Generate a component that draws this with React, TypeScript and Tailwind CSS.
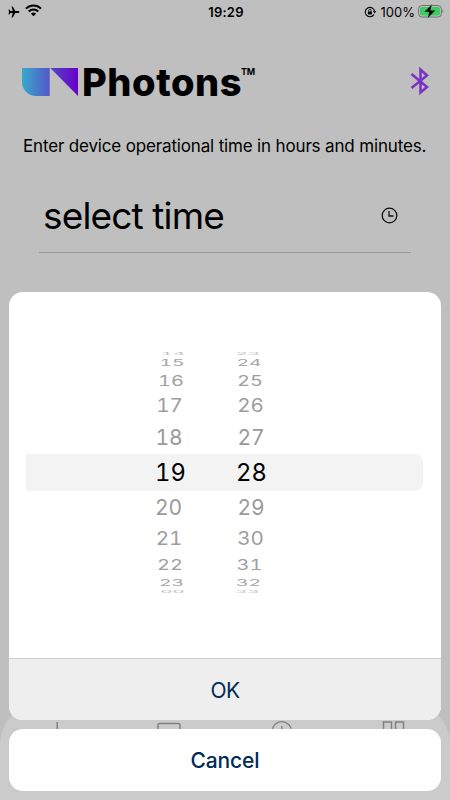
import React from "react";

type WheelRow = {
  hour: string;
  minute: string;
  height: number;
  hourX: number;
  minuteX: number;
  scaleX: number;
  scaleY: number;
  tone: string;
};

const rows: WheelRow[] = [
  { hour: "14", minute: "23", height: 3, hourX: 173, minuteX: 248, scaleX: 0.88, scaleY: 0.18, tone: "text-[#bdbdbd]" },
  { hour: "15", minute: "24", height: 15, hourX: 172, minuteX: 249, scaleX: 0.92, scaleY: 0.4, tone: "text-[#a6a6a6]" },
  { hour: "16", minute: "25", height: 21, hourX: 171, minuteX: 250, scaleX: 0.95, scaleY: 0.68, tone: "text-[#a0a0a0]" },
  { hour: "17", minute: "26", height: 30, hourX: 169.5, minuteX: 250.5, scaleX: 0.98, scaleY: 0.86, tone: "text-[#9d9d9d]" },
  { hour: "18", minute: "27", height: 33, hourX: 169, minuteX: 251, scaleX: 1, scaleY: 1, tone: "text-[#9a9a9a]" },
  { hour: "19", minute: "28", height: 37, hourX: 170.5, minuteX: 251.5, scaleX: 1.13, scaleY: 1.15, tone: "text-black" },
  { hour: "20", minute: "29", height: 33, hourX: 168.500, minuteX: 251, scaleX: 1, scaleY: 1, tone: "text-[#9a9a9a]" },
  { hour: "21", minute: "30", height: 30, hourX: 169, minuteX: 250.5, scaleX: 0.98, scaleY: 0.86, tone: "text-[#9d9d9d]" },
  { hour: "22", minute: "31", height: 21, hourX: 170, minuteX: 249.5, scaleX: 0.95, scaleY: 0.68, tone: "text-[#a0a0a0]" },
  { hour: "23", minute: "32", height: 15, hourX: 171.5, minuteX: 248.5, scaleX: 0.92, scaleY: 0.4, tone: "text-[#a6a6a6]" },
  { hour: "00", minute: "33", height: 3, hourX: 172.5, minuteX: 247.5, scaleX: 0.88, scaleY: 0.18, tone: "text-[#bdbdbd]" },
];

function StatusBar() {
  return (
    <div className="grid h-6 grid-cols-3 items-center pl-2 pr-1.5">
      <div className="flex items-center gap-[5px]">
        <svg width="12" height="12" viewBox="0 0 24 24">
          <path d="M23 12c0-1-1.300-1.800-3-1.800h-5.500L9.500 1H7l2.500 9.200H5L2.800 7H1l1 5-1 5h1.800L5 13.800h4.500L7 23h2.500l5-9.200H20c1.700 0 3-.8 3-1.800z" />
        </svg>
        <svg className="-mt-[3px]" width="17" height="13" viewBox="0 0 17 13" fill="none" stroke="black" strokeWidth="2">
          <path d="M1 4.600a10.700 10.700 0 0 1 15 0M3.700 7.500a6.900 6.900 0 0 1 9.600 0" />
          <path d="M5.900 9.700a3.800 3.800 0 0 1 5.200 0L8.500 12.300z" fill="black" stroke="none" />
        </svg>
      </div>
      <div className="text-center text-[13px] font-semibold leading-none tracking-[0.2px]">19:29</div>
      <div className="flex items-center justify-end">
        <svg width="12" height="12" viewBox="0 0 12 12" fill="none" stroke="black">
          <path d="M9.900 8.600A4.700 4.700 0 1 1 10.600 5.500" strokeWidth="1.100" />
          <path d="M9 5.300h3.100L10.600 7.400z" fill="black" stroke="none" />
          <rect x="3.900" y="5.500" width="4" height="3" fill="black" stroke="none" />
          <path d="M4.700 5.500V4.500a1.200 1.200 0 0 1 2.400 0v1" strokeWidth=".8" />
        </svg>
        <span className="ml-[5px] text-[13px] leading-none">100%</span>
        <svg className="-mt-[2px] ml-[3px]" width="26" height="16" viewBox="0 0 26 16">
          <rect x=".6" y="2.500" width="22.800" height="11.500" rx="3.200" fill="none" stroke="#707070" />
          <rect x="2" y="4" width="20" height="8.500" rx="1.800" fill="#3bcb60" />
          <path d="M24.500 6.500c1 .3 1 3.300 0 3.600z" fill="#666" />
          <path d="M13.900 1.300L6.200 9h4.900L9.700 15.200l7.800-7.900h-4.900z" fill="black" stroke="#3bcb60" strokeWidth=".4" />
        </svg>
      </div>
    </div>
  );
}

function Brand() {
  return (
    <div className="flex h-[34px] items-start pl-[22px] pr-5">
      <svg className="mt-[3px] shrink-0" width="56" height="28" viewBox="0 0 56 28">
        <defs>
          <linearGradient id="brandLeft" x1="0" x2="1">
            <stop offset="0" stopColor="#38aacb" />
            <stop offset="1" stopColor="#5555c9" />
          </linearGradient>
          <linearGradient id="brandRight" x1="0" x2="1">
            <stop offset="0" stopColor="#5148c5" />
            <stop offset="1" stopColor="#6b00c8" />
          </linearGradient>
        </defs>
        <path d="M0 0h27.700v28H14A14 14 0 0 1 0 14z" fill="url(#brandLeft)" />
        <path d="M28.300 0H56v28z" fill="url(#brandRight)" />
      </svg>
      <span className="ml-[4px] w-[159px] whitespace-nowrap text-[38px] font-extrabold leading-[34px] tracking-[0.6px]">
        Photons
      </span>
      <span className="mt-[2px] text-[9px] font-bold leading-[10px] tracking-[-0.2px]">TM</span>
      <svg className="ml-auto mt-[2px]" width="20" height="28" viewBox="0 0 20 28" fill="none" stroke="#7a32c8" strokeWidth="2.500">
        <path d="M1.500 7L17 20l-6.500 5.500v-23L17 8.500 1.500 21" />
      </svg>
    </div>
  );
}

function TabBar() {
  return (
    <div className="mt-auto flex h-[96px] justify-between rounded-t-[40px] bg-[#cbcbcb] pl-11 pr-[42px] pt-[16px]">
      <svg width="26" height="26" viewBox="0 0 26 26" stroke="#808080" strokeWidth="1.500">
        <path d="M13.200 2v22M2.500 13h22" />
      </svg>
      <svg className="ml-[19px]" width="26" height="26" viewBox="0 0 26 26" fill="none" stroke="#808080" strokeWidth="1.500">
        <rect x="2" y="3.500" width="22" height="18" rx="1.500" />
      </svg>
      <svg className="ml-[21px]" width="26" height="26" viewBox="0 0 26 26" fill="none" stroke="#808080" strokeWidth="1.300">
        <circle cx="11.800" cy="11.500" r="9.800" />
        <path d="M11.800 6v6h5" />
      </svg>
      <svg className="ml-[19px]" width="26" height="26" viewBox="0 0 26 26" fill="none" stroke="#808080" strokeWidth="1.500">
        <path d="M1.500 2h8v8h-8zM13.500 2h8v8h-8zM1.500 14h8v8h-8zM13.500 14h8v8h-8z" />
      </svg>
    </div>
  );
}

function Numeral({ value, x, row }: { value: string; x: number; row: WheelRow }) {
  return (
    <span
      className="col-start-1 row-start-1 block w-10 text-center text-[21px] leading-[24px] tabular-nums"
      style={{ transform: `translate(${x - 29}px, 0px) scale(${row.scaleX}, ${row.scaleY})` }}
    >
      {value}
    </span>
  );
}

function Wheel() {
  return (
    <div className="flex h-[366px] flex-col pt-[60px]">
      {rows.map((row) => {
        const selected = row.height === 37;
        const inset = selected ? 17 : 0;
        return (
          <div
            key={row.hour}
            className={`grid shrink-0 content-center ${row.tone} ${
              selected ? "ml-[17px] mr-[18px] rounded-r-lg bg-[#f3f3f3]" : ""
            }`}
            style={{ height: row.height }}
          >
            <Numeral value={row.hour} x={row.hourX - inset} row={row} />
            <Numeral value={row.minute} x={row.minuteX - inset} row={row} />
          </div>
        );
      })}
    </div>
  );
}

export default function App() {
  return (
    <main className="relative h-[800px] w-[450px] overflow-hidden bg-[#bfbfbf] font-['Inter','Liberation_Sans',sans-serif] text-black">
      <div className="flex h-full flex-col">
        <StatusBar />
        <div className="mt-[41px]">
          <Brand />
        </div>
        <p className="mt-[35px] h-6 whitespace-nowrap pl-[23px] text-[17px] leading-6 tracking-[-0.16px]">
          Enter device operational time in hours and minutes.
        </p>
        <div className="mx-[39px] mt-[37px] flex h-[58px] items-start justify-between border-b border-[#999] pl-[4px] pr-[13px]">
          <span className="whitespace-nowrap pt-px text-[37px] leading-[40px] tracking-[-0.85px]">select time</span>
          <svg className="mt-[12px]" width="17" height="17" viewBox="0 0 17 17" fill="none" stroke="#111" strokeWidth="1.300">
            <circle cx="8.500" cy="8.500" r="7.300" />
            <path d="M8 4v5h4.500" />
          </svg>
        </div>
        <TabBar />
      </div>

      <div className="absolute inset-x-[9px] bottom-[9px] flex flex-col gap-[9px]">
        <div className="overflow-hidden rounded-[14px] bg-white">
          <Wheel />
          <button className="block h-[62px] w-full border-t border-[#cecece] bg-[#eeeeee] pt-[2px] text-[21px] tracking-[-0.6px] text-[#002b55]">
            OK
          </button>
        </div>
        <button className="h-[62px] rounded-[14px] bg-white pt-[2px] text-[21px] font-medium tracking-[-0.1px] text-[#002b55]">
          Cancel
        </button>
      </div>
    </main>
  );
}
